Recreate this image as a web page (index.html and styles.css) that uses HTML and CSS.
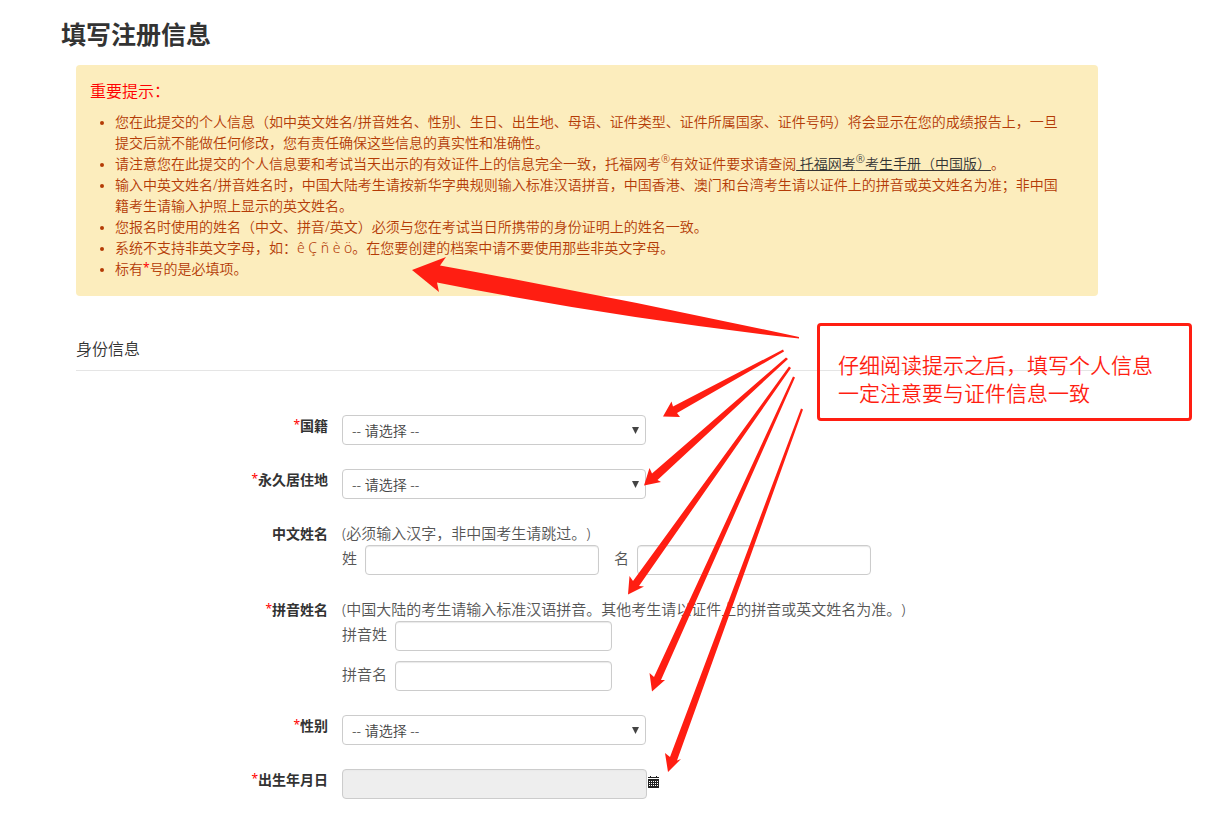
FILE: index.html
```html
<!DOCTYPE html>
<html lang="zh-CN">
<head>
<meta charset="utf-8">
<title>填写注册信息</title>
<link rel="stylesheet" href="styles.css">
</head>
<body>
<main class="page">
  <h1 class="title">填写注册信息</h1>
  <section class="notice">
    <h2 class="notice-title">重要提示：</h2>
    <ul class="notice-list">
      <li>您在此提交的个人信息（如中英文姓名/拼音姓名、性别、生日、出生地、母语、证件类型、证件所属国家、证件号码）将会显示在您的成绩报告上，一旦提交后就不能做任何修改，您有责任确保这些信息的真实性和准确性。</li>
      <li>请注意您在此提交的个人信息要和考试当天出示的有效证件上的信息完全一致，托福网考<sup>®</sup>有效证件要求请查阅<a href="#handbook">&nbsp;托福网考<sup>®</sup>考生手册（中国版）</a>。</li>
      <li>输入中英文姓名/拼音姓名时，中国大陆考生请按新华字典规则输入标准汉语拼音，中国香港、澳门和台湾考生请以证件上的拼音或英文姓名为准；非中国籍考生请输入护照上显示的英文姓名。</li>
      <li>您报名时使用的姓名（中文、拼音/英文）必须与您在考试当日所携带的身份证明上的姓名一致。</li>
      <li>系统不支持非英文字母，如：ê Ç ñ è ö。在您要创建的档案中请不要使用那些非英文字母。</li>
      <li>标有<span class="required">*</span>号的是必填项。</li>
    </ul>
  </section>

  <form class="form">
    <h2 class="section-title">身份信息</h2>
    <div class="rows">
      <div class="row">
        <label class="label" for="nationality"><span class="required">*</span>国籍</label>
        <div class="select-wrap">
          <select class="control" id="nationality"><option>-- 请选择 --</option></select>
          <svg class="caret" viewBox="0 0 7 7" aria-hidden="true"><path d="M0 0h7L3.5 7z"/></svg>
        </div>
      </div>
      <div class="row">
        <label class="label" for="residence"><span class="required">*</span>永久居住地</label>
        <div class="select-wrap">
          <select class="control" id="residence"><option>-- 请选择 --</option></select>
          <svg class="caret" viewBox="0 0 7 7" aria-hidden="true"><path d="M0 0h7L3.5 7z"/></svg>
        </div>
      </div>
      <div class="row">
        <span class="label">中文姓名</span>
        <div class="field">
          <p class="hint">(必须输入汉字，非中国考生请跳过。)</p>
          <div class="names">
            <div class="pair"><label for="cn-last">姓</label><input class="control name" id="cn-last" type="text"></div>
            <div class="pair"><label for="cn-first">名</label><input class="control name" id="cn-first" type="text"></div>
          </div>
        </div>
      </div>
      <div class="row">
        <span class="label"><span class="required">*</span>拼音姓名</span>
        <div class="field">
          <p class="hint">(中国大陆的考生请输入标准汉语拼音。其他考生请以证件上的拼音或英文姓名为准。)</p>
          <div class="stack">
            <div class="pair"><label for="py-last">拼音姓</label><input class="control pinyin" id="py-last" type="text"></div>
            <div class="pair"><label for="py-first">拼音名</label><input class="control pinyin" id="py-first" type="text"></div>
          </div>
        </div>
      </div>
      <div class="row">
        <label class="label" for="gender"><span class="required">*</span>性别</label>
        <div class="select-wrap">
          <select class="control" id="gender"><option>-- 请选择 --</option></select>
          <svg class="caret" viewBox="0 0 7 7" aria-hidden="true"><path d="M0 0h7L3.5 7z"/></svg>
        </div>
      </div>
      <div class="row">
        <label class="label" for="birth"><span class="required">*</span>出生年月日</label>
        <div class="date">
          <input class="control birth" id="birth" type="text" readonly>
          <button class="calendar" type="button" aria-label="选择日期">
            <svg viewBox="0 0 11 12" aria-hidden="true">
              <path fill="#222" d="M0 1h2V0h1v1h5V0h1v1h2v1H0zM0 3h11v9H0z"/>
              <path stroke="#fff" d="M1 5.5h9M1 7.5h9M1 9.5h9" stroke-dasharray="1 1"/>
            </svg>
          </button>
        </div>
      </div>
    </div>
  </form>
</main>

<aside class="callout">仔细阅读提示之后，填写个人信息<br>一定注意要与证件信息一致</aside>
<svg class="arrows" width="1229" height="822" viewBox="0 0 1229 822" aria-hidden="true">
  <path d="M412 270L446 257L440 265.5Q620 298 799 337L799 338.5Q610 317 437 282.5L439 292z"/>
  <path d="M663 416.5L671.5 401.5L673 406.500L783 349.500L784 351.500L677 413L680 417z"/>
  <path d="M644 485.5L649.5 468L652 473.500L786 357.500L788 359L657.500 480L661 482z"/>
  <path d="M628 594.5L629.5 576L633 581L789 366.500L791 368L639 586L644 586.500z"/>
  <path d="M652 691.500L649.500 673L654 677L793 376.500L795 377.500L661 680L665 680z"/>
  <path d="M668 772L665 753L670 757L801 408.500L803 409.500L677 760.500L681 759z"/>
</svg>
</body>
</html>
```
FILE: styles.css
```css
* {
  box-sizing: border-box;
}

body {
  position: relative;
  margin: 0;
  background: #fff;
  color: #333;
  font: 350 14px/21px "Noto Sans", "Noto Sans CJK SC", sans-serif;
  text-spacing-trim: space-all;
}

.page {
  padding: 15px 131px 23px 76px;
}

.title {
  margin: 0 0 10px -15px;
  font-size: 25px;
  line-height: 38px;
  padding-bottom: 2px;
}

.notice {
  padding: 15px 35px 17px 14px;
  border-radius: 4px;
  background: #fcedbd;
  color: #b43b06;
}

.notice-title {
  margin: 0 0 9px;
  color: #f00;
  font-size: 16px;
  font-weight: 350;
  line-height: 22px;
}

.notice-list {
  margin: 0;
  padding-left: 25px;
}

.notice-list li::marker {
  font-size: 11px;
}

.notice sup {
  font-size: 11px;
  line-height: 0;
}

.notice a {
  color: #333;
}

.required {
  color: #f00;
  font-size: 12px;
  font-weight: 400;
  line-height: 0;
  vertical-align: 2px;
}

.section-title {
  margin: 42px 0 44px;
  padding-bottom: 10px;
  border-bottom: 1px solid #e5e5e5;
  font-size: 16px;
  font-weight: 350;
  line-height: 22px;
}

.rows {
  display: grid;
  gap: 24px;
}

.row {
  display: grid;
  grid-template-columns: 252px 1fr;
  gap: 14px;
}

.label {
  font-weight: 700;
  line-height: 22px;
  text-align: right;
}

.field {
  color: #555;
  font-size: 15px;
  line-height: 22px;
}

.hint {
  margin: 0;
  line-height: 20px;
  padding-bottom: 2px;
}

.names {
  display: flex;
  gap: 15px;
}

.stack {
  display: grid;
  gap: 10px;
}

.pair {
  display: flex;
  align-items: center;
  gap: 8px;
  line-height: 26px;
}

.pair label {
  align-self: flex-start;
}

.control {
  display: block;
  height: 30px;
  margin: 0;
  padding: 0 9px;
  border: 1px solid #ccc;
  border-radius: 4px;
  background: #fff;
  color: #444;
  font: inherit;
}

input.control {
  box-shadow: inset 0 1px 1px #e9e9e9;
}

.name {
  width: 234px;
}

.pinyin {
  width: 217px;
}

.select-wrap {
  position: relative;
  width: 304px;
}

.select-wrap .control {
  width: 100%;
  appearance: none;
}

.caret {
  position: absolute;
  top: 12px;
  right: 7px;
  width: 7px;
  height: 7px;
  fill: #444;
  pointer-events: none;
}

.date {
  display: flex;
  align-items: flex-start;
  gap: 1px;
}

.birth {
  width: 305px;
  background: #eee;
}

.calendar {
  width: 11px;
  height: 12px;
  margin-top: 7px;
  padding: 0;
  border: 0;
  background: none;
}

.calendar svg {
  display: block;
  width: 11px;
  height: 12px;
}

.callout {
  position: absolute;
  top: 323px;
  left: 817px;
  width: 375px;
  padding: 25px 18px 11px;
  border: 3px solid #ff1e12;
  border-radius: 4px;
  color: #ff1e12;
  font-size: 21px;
  line-height: 28px;
}

.arrows {
  position: absolute;
  top: 0;
  left: 0;
  fill: #ff1e12;
  pointer-events: none;
}
```
